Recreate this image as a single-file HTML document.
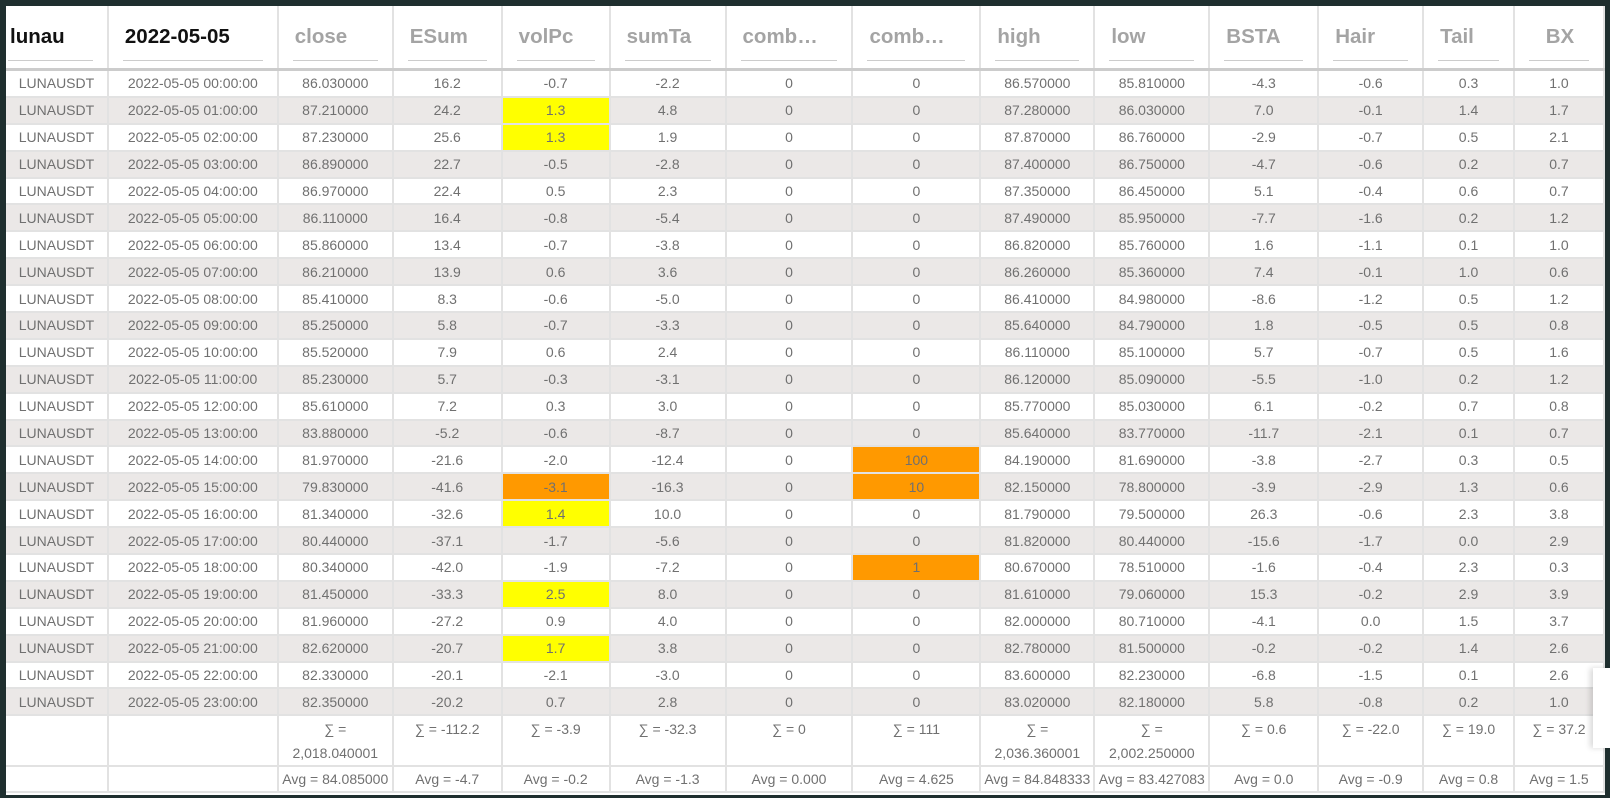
<!DOCTYPE html>
<html><head><meta charset="utf-8"><style>
html,body{margin:0;padding:0;background:#1f2f2f;width:1610px;height:798px;overflow:hidden}
#w{position:absolute;left:6px;top:6px;width:1599px;height:789px;background:#fff;overflow:hidden}
table{border-collapse:collapse;table-layout:fixed;font-family:"Liberation Sans",sans-serif;}
td,th{border:2px solid #e2e2e2;text-align:center;padding:0;color:#707070;font-size:14px;white-space:nowrap;overflow:hidden}
th{height:62px;font-size:20.5px;color:#a4a4a4;font-weight:bold;border-top:none;border-bottom:3px solid #ccc;position:relative;text-align:left;vertical-align:top}
th span{display:block;margin:0 14px;padding:19px 0 11px 2px;border-bottom:1px solid #ccc}
th.k{color:#111}
td{height:24.9px}
tr.z td{background:#ebe8e7}
td.y{background:#ffff00!important}
td.o{background:#ff9900!important}
tr.s td{height:48px;vertical-align:top;padding-top:1px;line-height:24px;white-space:normal}
tr.a td{height:24px}
td:first-child,th:first-child{border-left:none}
#box{position:absolute;left:1593px;top:668px;width:17px;height:80px;background:#fff;box-shadow:-3px 0 6px rgba(0,0,0,.15)}
</style></head><body><div id="w">
<table>
<colgroup><col style="width:102px"><col style="width:170px"><col style="width:115px"><col style="width:109px"><col style="width:108px"><col style="width:116px"><col style="width:127px"><col style="width:128px"><col style="width:114px"><col style="width:115px"><col style="width:109px"><col style="width:105px"><col style="width:91px"><col style="width:90px"></colgroup>
<tr><th class="k"><span style="margin:0 14px 0 2px">lunau</span></th><th class="k"><span>2022-05-05</span></th><th><span>close</span></th><th><span>ESum</span></th><th><span>volPc</span></th><th><span>sumTa</span></th><th><span>comb…</span></th><th><span>comb…</span></th><th><span>high</span></th><th><span>low</span></th><th><span>BSTA</span></th><th><span>Hair</span></th><th><span>Tail</span></th><th style="text-align:center"><span>BX</span></th></tr>
<tr><td>LUNAUSDT</td><td>2022-05-05 00:00:00</td><td>86.030000</td><td>16.2</td><td>-0.7</td><td>-2.2</td><td>0</td><td>0</td><td>86.570000</td><td>85.810000</td><td>-4.3</td><td>-0.6</td><td>0.3</td><td>1.0</td></tr>
<tr class="z"><td>LUNAUSDT</td><td>2022-05-05 01:00:00</td><td>87.210000</td><td>24.2</td><td class="y">1.3</td><td>4.8</td><td>0</td><td>0</td><td>87.280000</td><td>86.030000</td><td>7.0</td><td>-0.1</td><td>1.4</td><td>1.7</td></tr>
<tr><td>LUNAUSDT</td><td>2022-05-05 02:00:00</td><td>87.230000</td><td>25.6</td><td class="y">1.3</td><td>1.9</td><td>0</td><td>0</td><td>87.870000</td><td>86.760000</td><td>-2.9</td><td>-0.7</td><td>0.5</td><td>2.1</td></tr>
<tr class="z"><td>LUNAUSDT</td><td>2022-05-05 03:00:00</td><td>86.890000</td><td>22.7</td><td>-0.5</td><td>-2.8</td><td>0</td><td>0</td><td>87.400000</td><td>86.750000</td><td>-4.7</td><td>-0.6</td><td>0.2</td><td>0.7</td></tr>
<tr><td>LUNAUSDT</td><td>2022-05-05 04:00:00</td><td>86.970000</td><td>22.4</td><td>0.5</td><td>2.3</td><td>0</td><td>0</td><td>87.350000</td><td>86.450000</td><td>5.1</td><td>-0.4</td><td>0.6</td><td>0.7</td></tr>
<tr class="z"><td>LUNAUSDT</td><td>2022-05-05 05:00:00</td><td>86.110000</td><td>16.4</td><td>-0.8</td><td>-5.4</td><td>0</td><td>0</td><td>87.490000</td><td>85.950000</td><td>-7.7</td><td>-1.6</td><td>0.2</td><td>1.2</td></tr>
<tr><td>LUNAUSDT</td><td>2022-05-05 06:00:00</td><td>85.860000</td><td>13.4</td><td>-0.7</td><td>-3.8</td><td>0</td><td>0</td><td>86.820000</td><td>85.760000</td><td>1.6</td><td>-1.1</td><td>0.1</td><td>1.0</td></tr>
<tr class="z"><td>LUNAUSDT</td><td>2022-05-05 07:00:00</td><td>86.210000</td><td>13.9</td><td>0.6</td><td>3.6</td><td>0</td><td>0</td><td>86.260000</td><td>85.360000</td><td>7.4</td><td>-0.1</td><td>1.0</td><td>0.6</td></tr>
<tr><td>LUNAUSDT</td><td>2022-05-05 08:00:00</td><td>85.410000</td><td>8.3</td><td>-0.6</td><td>-5.0</td><td>0</td><td>0</td><td>86.410000</td><td>84.980000</td><td>-8.6</td><td>-1.2</td><td>0.5</td><td>1.2</td></tr>
<tr class="z"><td>LUNAUSDT</td><td>2022-05-05 09:00:00</td><td>85.250000</td><td>5.8</td><td>-0.7</td><td>-3.3</td><td>0</td><td>0</td><td>85.640000</td><td>84.790000</td><td>1.8</td><td>-0.5</td><td>0.5</td><td>0.8</td></tr>
<tr><td>LUNAUSDT</td><td>2022-05-05 10:00:00</td><td>85.520000</td><td>7.9</td><td>0.6</td><td>2.4</td><td>0</td><td>0</td><td>86.110000</td><td>85.100000</td><td>5.7</td><td>-0.7</td><td>0.5</td><td>1.6</td></tr>
<tr class="z"><td>LUNAUSDT</td><td>2022-05-05 11:00:00</td><td>85.230000</td><td>5.7</td><td>-0.3</td><td>-3.1</td><td>0</td><td>0</td><td>86.120000</td><td>85.090000</td><td>-5.5</td><td>-1.0</td><td>0.2</td><td>1.2</td></tr>
<tr><td>LUNAUSDT</td><td>2022-05-05 12:00:00</td><td>85.610000</td><td>7.2</td><td>0.3</td><td>3.0</td><td>0</td><td>0</td><td>85.770000</td><td>85.030000</td><td>6.1</td><td>-0.2</td><td>0.7</td><td>0.8</td></tr>
<tr class="z"><td>LUNAUSDT</td><td>2022-05-05 13:00:00</td><td>83.880000</td><td>-5.2</td><td>-0.6</td><td>-8.7</td><td>0</td><td>0</td><td>85.640000</td><td>83.770000</td><td>-11.7</td><td>-2.1</td><td>0.1</td><td>0.7</td></tr>
<tr><td>LUNAUSDT</td><td>2022-05-05 14:00:00</td><td>81.970000</td><td>-21.6</td><td>-2.0</td><td>-12.4</td><td>0</td><td class="o">100</td><td>84.190000</td><td>81.690000</td><td>-3.8</td><td>-2.7</td><td>0.3</td><td>0.5</td></tr>
<tr class="z"><td>LUNAUSDT</td><td>2022-05-05 15:00:00</td><td>79.830000</td><td>-41.6</td><td class="o">-3.1</td><td>-16.3</td><td>0</td><td class="o">10</td><td>82.150000</td><td>78.800000</td><td>-3.9</td><td>-2.9</td><td>1.3</td><td>0.6</td></tr>
<tr><td>LUNAUSDT</td><td>2022-05-05 16:00:00</td><td>81.340000</td><td>-32.6</td><td class="y">1.4</td><td>10.0</td><td>0</td><td>0</td><td>81.790000</td><td>79.500000</td><td>26.3</td><td>-0.6</td><td>2.3</td><td>3.8</td></tr>
<tr class="z"><td>LUNAUSDT</td><td>2022-05-05 17:00:00</td><td>80.440000</td><td>-37.1</td><td>-1.7</td><td>-5.6</td><td>0</td><td>0</td><td>81.820000</td><td>80.440000</td><td>-15.6</td><td>-1.7</td><td>0.0</td><td>2.9</td></tr>
<tr><td>LUNAUSDT</td><td>2022-05-05 18:00:00</td><td>80.340000</td><td>-42.0</td><td>-1.9</td><td>-7.2</td><td>0</td><td class="o">1</td><td>80.670000</td><td>78.510000</td><td>-1.6</td><td>-0.4</td><td>2.3</td><td>0.3</td></tr>
<tr class="z"><td>LUNAUSDT</td><td>2022-05-05 19:00:00</td><td>81.450000</td><td>-33.3</td><td class="y">2.5</td><td>8.0</td><td>0</td><td>0</td><td>81.610000</td><td>79.060000</td><td>15.3</td><td>-0.2</td><td>2.9</td><td>3.9</td></tr>
<tr><td>LUNAUSDT</td><td>2022-05-05 20:00:00</td><td>81.960000</td><td>-27.2</td><td>0.9</td><td>4.0</td><td>0</td><td>0</td><td>82.000000</td><td>80.710000</td><td>-4.1</td><td>0.0</td><td>1.5</td><td>3.7</td></tr>
<tr class="z"><td>LUNAUSDT</td><td>2022-05-05 21:00:00</td><td>82.620000</td><td>-20.7</td><td class="y">1.7</td><td>3.8</td><td>0</td><td>0</td><td>82.780000</td><td>81.500000</td><td>-0.2</td><td>-0.2</td><td>1.4</td><td>2.6</td></tr>
<tr><td>LUNAUSDT</td><td>2022-05-05 22:00:00</td><td>82.330000</td><td>-20.1</td><td>-2.1</td><td>-3.0</td><td>0</td><td>0</td><td>83.600000</td><td>82.230000</td><td>-6.8</td><td>-1.5</td><td>0.1</td><td>2.6</td></tr>
<tr class="z"><td>LUNAUSDT</td><td>2022-05-05 23:00:00</td><td>82.350000</td><td>-20.2</td><td>0.7</td><td>2.8</td><td>0</td><td>0</td><td>83.020000</td><td>82.180000</td><td>5.8</td><td>-0.8</td><td>0.2</td><td>1.0</td></tr>
<tr class="s"><td></td><td></td><td>∑ =<br>2,018.040001</td><td>∑ = -112.2</td><td>∑ = -3.9</td><td>∑ = -32.3</td><td>∑ = 0</td><td>∑ = 111</td><td>∑ =<br>2,036.360001</td><td>∑ =<br>2,002.250000</td><td>∑ = 0.6</td><td>∑ = -22.0</td><td>∑ = 19.0</td><td>∑ = 37.2</td></tr>
<tr class="a"><td></td><td></td><td>Avg = 84.085000</td><td>Avg = -4.7</td><td>Avg = -0.2</td><td>Avg = -1.3</td><td>Avg = 0.000</td><td>Avg = 4.625</td><td>Avg = 84.848333</td><td>Avg = 83.427083</td><td>Avg = 0.0</td><td>Avg = -0.9</td><td>Avg = 0.8</td><td>Avg = 1.5</td></tr>
</table>
</div>
<div id="box"></div>
</body></html>
